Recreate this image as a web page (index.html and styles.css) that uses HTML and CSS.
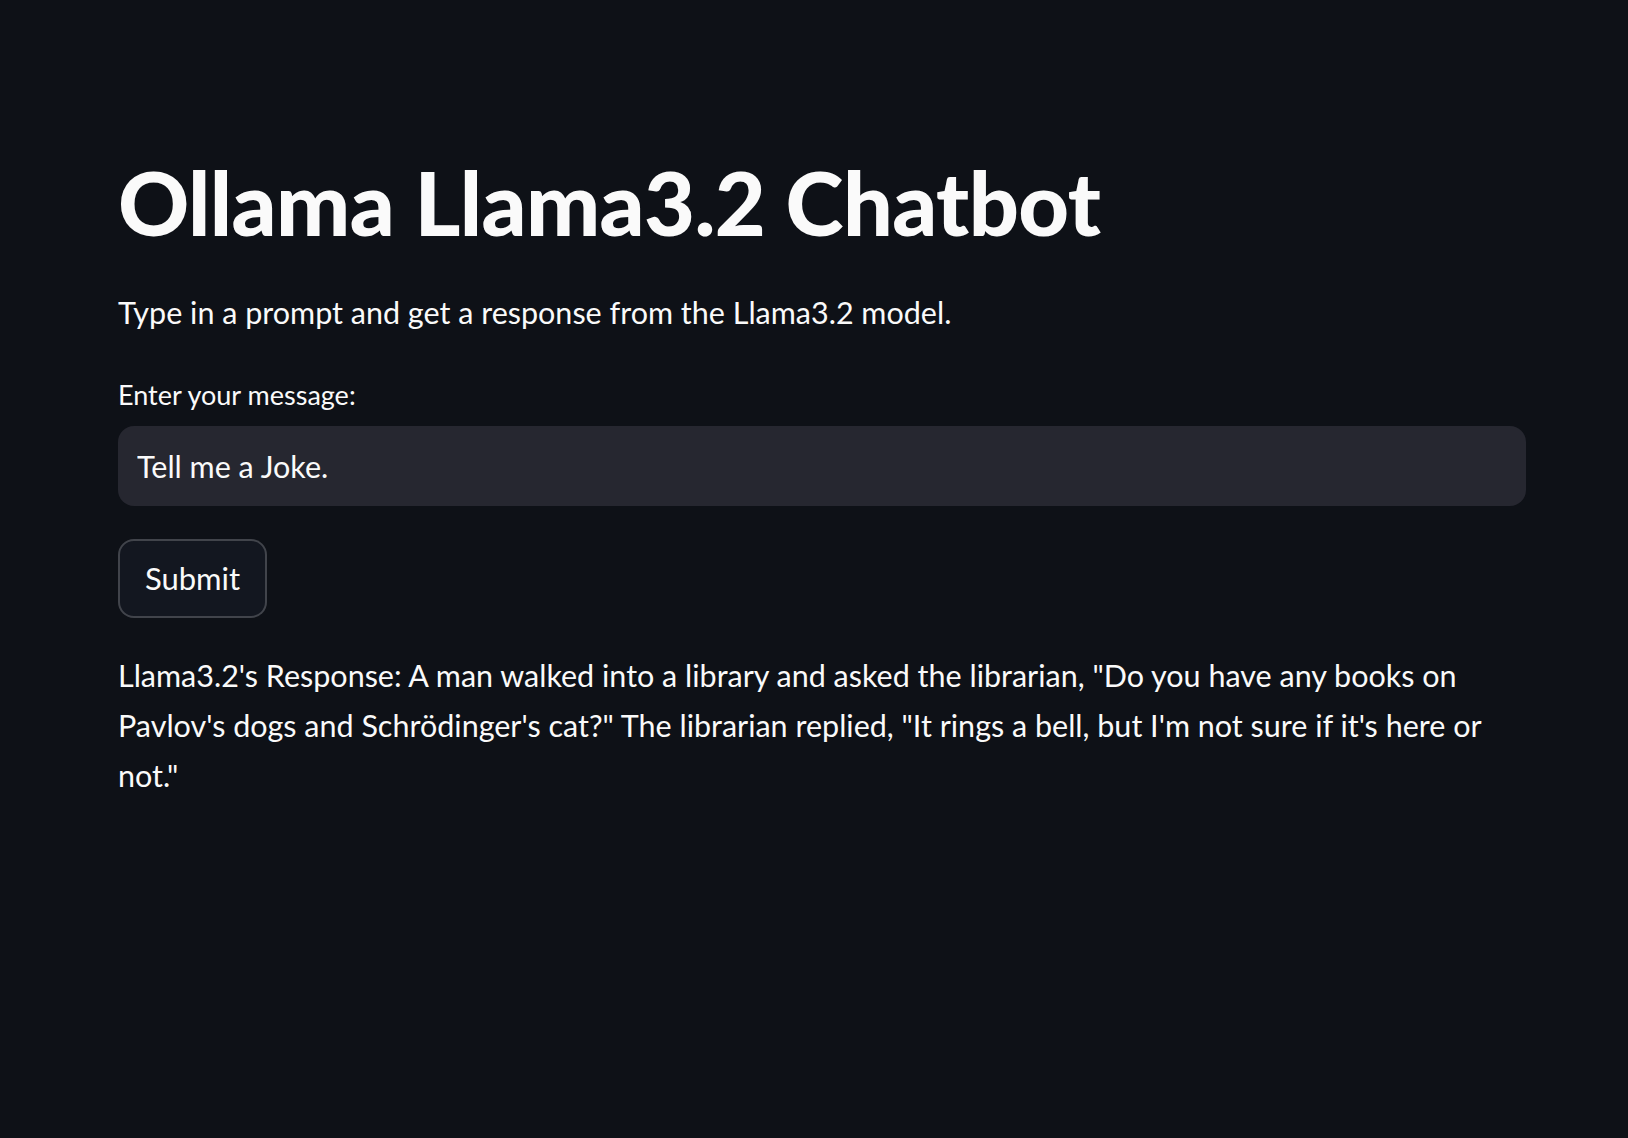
FILE: index.html
```html
<!DOCTYPE html>
<html lang="en">
<head>
<meta charset="utf-8">
<title>Ollama Llama3.2 Chatbot</title>
<link rel="stylesheet" href="styles.css">
</head>
<body>
<main class="main">
  <div class="block">
    <h1 class="title">Ollama Llama3.2 Chatbot</h1>
    <p class="text">Type in a prompt and get a response from the Llama3.2 model.</p>
    <div class="field">
      <label class="label" for="msg">Enter your message:</label>
      <div class="input-wrap">
        <input id="msg" class="input" type="text" value="Tell me a Joke.">
      </div>
    </div>
    <div class="btn-row">
      <button class="btn" type="button">Submit</button>
    </div>
    <p class="text response">Llama3.2's Response: A man walked into a library and asked the librarian, "Do you have any books on Pavlov's dogs and Schrödinger's cat?" The librarian replied, "It rings a bell, but I'm not sure if it's here or not."</p>
  </div>
</main>
</body>
</html>
```

FILE: styles.css
```css
html, body {
  margin: 0;
  padding: 0;
  background: #0e1117;
  color: #fafafa;
  font-family: "Lato", "Open Sans", sans-serif;
}
.main {
  display: flex;
  justify-content: flex-start;
  padding: 0 0 0 118px;
}
.block {
  width: 1408px;
  display: flex;
  flex-direction: column;
  padding-top: 150px;
}
.title {
  margin: 0;
  font-size: 88px;
  font-weight: 900;
  line-height: 1.2;
  letter-spacing: -0.6px;
}
.text {
  margin: 31px 0 0;
  font-size: 30.5px;
  line-height: 50px;
}
.field {
  margin-top: 36px;
  display: flex;
  flex-direction: column;
}
.label {
  font-size: 27px;
  line-height: 1.6;
  margin-bottom: 10px;
}
.input-wrap {
  background: #262730;
  border-radius: 16px;
  height: 80px;
  display: flex;
  align-items: center;
}
.input {
  flex: 1;
  background: transparent;
  border: 0;
  outline: none;
  color: #fafafa;
  font-family: inherit;
  font-size: 30.5px;
  padding: 0 19px;
}
.btn-row {
  margin-top: 33px;
  display: flex;
}
.btn {
  width: 149px;
  height: 79px;
  background: #131720;
  border: 2px solid rgba(250, 250, 250, 0.2);
  border-radius: 16px;
  color: #fafafa;
  font-family: inherit;
  font-size: 31px;
  padding: 0;
}
.response {
  margin-top: 32px;
}
```
